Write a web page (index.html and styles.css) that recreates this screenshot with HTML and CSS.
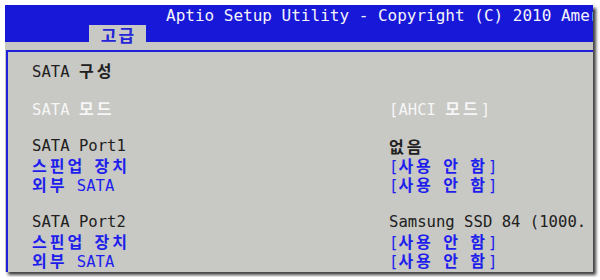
FILE: index.html
```html
<!DOCTYPE html>
<html lang="ko">
<head>
    <meta charset="UTF-8">
    <title>Aptio Setup Utility - SATA 구성</title>
    <link rel="stylesheet" href="styles.css">
</head>
<body>
    <div class="screen">
        <header class="header">
            <div class="title">Aptio Setup Utility - Copyright (C) 2010 Amer</div>
            <div class="tab"><span class="ko">고급</span></div>
        </header>
        <div class="strip"></div>

        <div class="panel">
            <div class="item black wide">SATA <span class="ko">구성</span></div>
            <div class="blank"></div>

            <div class="item white">SATA <span class="ko">모드</span></div>
            <div class="item white">[AHCI <span class="ko">모드</span>]</div>
            <div class="blank"></div>

            <div class="item black">SATA Port1</div>
            <div class="item black"><span class="ko">없음</span></div>
            <div class="item blue"><span class="ko">스핀업</span> <span class="ko">장치</span></div>
            <div class="item blue">[<span class="ko">사용</span> <span class="ko">안</span> <span class="ko">함</span>]</div>
            <div class="item blue"><span class="ko">외부</span> SATA</div>
            <div class="item blue">[<span class="ko">사용</span> <span class="ko">안</span> <span class="ko">함</span>]</div>
            <div class="blank"></div>

            <div class="item black">SATA Port2</div>
            <div class="item black">Samsung SSD 84 (1000.</div>
            <div class="item blue"><span class="ko">스핀업</span> <span class="ko">장치</span></div>
            <div class="item blue">[<span class="ko">사용</span> <span class="ko">안</span> <span class="ko">함</span>]</div>
            <div class="item blue"><span class="ko">외부</span> SATA</div>
            <div class="item blue">[<span class="ko">사용</span> <span class="ko">안</span> <span class="ko">함</span>]</div>
        </div>
    </div>
</body>
</html>
```

FILE: styles.css
```css
* {
    margin: 0;
    padding: 0;
    box-sizing: border-box;
}
body {
    background: #ffffff;
    padding: 5px;
    font-family: "DejaVu Sans Mono", "Noto Sans CJK KR", monospace;
}
.screen {
    width: 588px;
    height: 267px;
    display: flex;
    flex-direction: column;
    background: #c8c8c4;
    overflow: hidden;
    box-shadow: 3px 3px 3px rgba(30, 30, 30, 0.85);
}
.header {
    height: 37px;
    flex: none;
    background: #1818d8;
    display: flex;
    flex-direction: column;
}
.title {
    padding: 2px 0 0 161px;
    color: #f4f4f8;
    font-size: 16px;
    line-height: 18px;
    white-space: nowrap;
}
.tab {
    margin: auto 0 0 84px;
    width: 57px;
    height: 20px;
    background: #c8c8c4;
    color: #2424d8;
    line-height: 20px;
    text-align: center;
}
.tab .ko {
    font-size: 17px;
    line-height: 20px;
    letter-spacing: 2px;
    padding-left: 2px;
}
.strip {
    height: 8px;
    flex: none;
}
.panel {
    flex: 1;
    margin-left: 1px;
    border-top: 2px solid #2020d8;
    border-left: 2px solid #2020d8;
    padding: 9px 0 0 24px;
    display: grid;
    grid-template-columns: 357px 1fr;
    grid-auto-rows: 19px;
    align-content: start;
    font-size: 15.6px;
    line-height: 19px;
}
.item {
    white-space: nowrap;
}
.wide,
.blank {
    grid-column: 1 / -1;
}
.ko {
    display: inline-block;
    height: 19px;
    line-height: 19px;
    font-family: "Noto Sans CJK KR", sans-serif;
    font-weight: bold;
    font-size: 16px;
    letter-spacing: 3px;
}
.black {
    color: #202020;
}
.white {
    color: #f6f6f6;
}
.blue {
    color: #1e1eec;
}
```
